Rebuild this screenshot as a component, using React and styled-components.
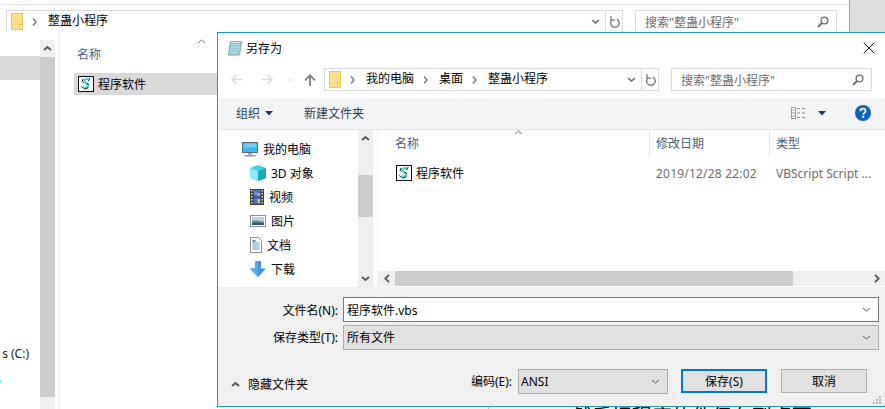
import React from "react";
import styled, { createGlobalStyle } from "styled-components";

const Global = createGlobalStyle`
  html, body { margin: 0; padding: 0; background: #fff; }
  * { box-sizing: border-box; }
  body { font-family: "Noto Sans", "Noto Sans CJK SC", sans-serif; font-size: 12px; color: #000; }
`;

const Screen = styled.div`
  position: relative; width: 885px; height: 409px; overflow: hidden; background: #fff;
`;

/* ---------- background explorer window ---------- */
const BackWindow = styled.div`
  display: flex; flex-direction: column; height: 100%;
`;
const BackTop = styled.div`
  display: flex; height: 32px; flex: none;
`;
const BackTopMain = styled.div`
  flex: none; width: 849px; display: flex; gap: 12px; padding: 10px 0 0 6px; position: relative;
  background: linear-gradient(#fff 4px, #e0e0e0 4px, #e0e0e0 5px, #fff 5px);
`;
const BackSideGray = styled.div`
  flex: 1; background: #dfdfdf; border-left: 1px solid #a0a0a0;
`;
const BackBody = styled.div`
  flex: 1; display: flex; min-height: 0;
`;
const BackNav = styled.div`
  width: 40px; flex: none; padding-top: 24px; position: relative; white-space: nowrap;
`;
const BackSelected = styled.div`
  height: 24px; background: #d9d9d9;
`;
const DriveLabel = styled.span`
  position: absolute; right: 11px; top: 313px; font-size: 12px; color: #222;
`;
const CyanDot = styled.i`
  position: absolute; left: 0; top: 348px; width: 1px; height: 3px; background: #6fe3f5;
`;
const BackScroll = styled.div`
  width: 15px; flex: none; background: #efefef; display: flex; flex-direction: column; align-items: center;
  margin-top: 8px;
`;
const BackThumb = styled.div`
  width: 15px; height: 340px; margin-top: 1px; background: #cdcdcd;
`;
const ArrowCell = styled.div`
  flex: none; height: ${p => p.$h || 16}px; display: flex; align-items: center; justify-content: center;
`;
const BackDivider = styled.div`
  width: 2px; margin-left: 3px; flex: none; background: #f0f0f0;
`;
const BackList = styled.div`
  flex: 1; padding: 13px 0 0 14px; position: relative;
`;
const BackHead = styled.div`
  height: 28px; padding-left: 3px; color: #4c607a; line-height: 20px; font-size: 12px;
`;
const BackSort = styled.span`
  position: absolute; left: 137px; top: 7px; display: flex;
`;
const BackRow = styled.div`
  height: 22px; margin-right: 0; background: #d9d9d9; display: flex; align-items: center; gap: 4px; padding-left: 4px;
`;
const UnderText = styled.div`
  position: absolute; left: 535px; top: 404px; font-size: 20px; line-height: 26px; white-space: pre; color: #000;
`;
const UnderLine = styled.i`
  position: absolute; left: 488px; top: 407px; width: 1px; height: 2px; background: #bbb;
`;

/* ---------- shared address + search ---------- */
const PathBox = styled.div`
  height: ${p => p.$h}px; width: ${p => p.$w}px; flex: none; border: 1px solid #d9d9d9; background: #fff;
  display: flex; align-items: center; padding-left: 4px; white-space: nowrap;
  ${p => p.$open ? "border-bottom: none;" : ""}
`;
const Crumb = styled.span`
  font-size: 12px; color: #000; line-height: 16px; margin-top: -2px;
`;
const CrumbSep = styled.span`
  display: flex; flex: none; margin: 0 11px 0 9px;
`;
const PathEnd = styled.div`
  margin-left: auto; display: flex; align-items: center; height: 100%;
`;
const ChevCell = styled.span`
  width: 22px; display: flex; justify-content: center; align-items: center; padding-left: 3px;
`;
const RefreshCell = styled.span`
  width: 17px; height: 100%; border-left: 1px solid #d9d9d9; display: flex; align-items: center; justify-content: center;
`;
const SearchBox = styled.div`
  width: ${p => p.$w}px; height: ${p => p.$h}px; flex: none; border: 1px solid #d9d9d9; background: #fff;
  display: flex; align-items: center; justify-content: space-between; padding: 0 7px 0 9px;
  color: #6d6d6d; font-size: 12px; white-space: nowrap;
  ${p => p.$open ? "border-bottom: none;" : ""}
`;

/* ---------- dialog ---------- */
const Dialog = styled.div`
  position: absolute; left: 217px; top: 32px; right: 0; height: 375px;
  background: #fff; border-top: 1px solid #1a9cb8; border-left: 1px solid #1a9cb8; border-bottom: 1px solid #1a9cb8;
  display: flex; flex-direction: column;
`;
const TitleBar = styled.div`
  height: 31px; flex: none; display: flex; align-items: center; padding: 0 10px 2px 9px; gap: 3px;
`;
const TitleText = styled.span`
  font-size: 12px; color: #000; flex: 1;
`;
const NavRow = styled.div`
  height: 34px; flex: none; display: flex; align-items: flex-start; padding-top: 4px;
`;
const NavBtn = styled.span`
  width: ${p => p.$w}px; height: 23px; flex: none; display: flex; align-items: center; justify-content: center;
`;
const NavGap = styled.div`
  width: ${p => p.$w}px; flex: none;
`;
const ToolBar = styled.div`
  height: 32px; flex: none; background: #f3f4f6; border-bottom: 1px solid #e5e5e5;
  display: flex; align-items: center; padding: 0 0 1px 18px; color: #2c4a6e;
`;
const ToolText = styled.span`
  font-size: 12px; color: #2b3f5c; margin-right: ${p => p.$mr || 0}px;
`;
const ToolIcon = styled.span`
  display: flex; margin-left: ${p => p.$ml || 0}px; margin-right: ${p => p.$mr || 0}px;
`;
const Content = styled.div`
  flex: none; height: 157px; display: flex;
`;
const NavPane = styled.div`
  width: 140px; flex: none; overflow: hidden; padding-top: 7px;
`;
const TreeRow = styled.div`
  height: 24px; display: flex; align-items: center; gap: 5px;
  padding-left: ${p => p.$root ? 24 : 32}px; font-size: 12px; color: #000; white-space: nowrap;
`;
const VScroll = styled.div`
  width: 15px; flex: none; background: #efefef; display: flex; flex-direction: column;
`;
const VThumb = styled.div`
  height: 42px; flex: none; margin-top: 2px; background: #cdcdcd;
`;
const VSpacer = styled.div` flex: 1; `;
const ListPane = styled.div`
  flex: 1; min-width: 0; margin-left: 4px; border-left: 1px solid #f4f4f4; display: flex; flex-direction: column; position: relative;
`;
const SortMark = styled.span`
  position: absolute; left: 136px; top: 0; display: flex;
`;
const HeadRow = styled.div`
  height: 27px; flex: none; display: flex;
`;
const HeadCell = styled.div`
  width: ${p => p.$w}px; flex: none; padding-left: ${p => p.$pl}px; padding-top: 5px; line-height: 18px;
  font-size: 12px; color: #4c607a; border-right: ${p => p.$sep ? "1px solid #e5e5e5" : "none"};
`;
const FileRow = styled.div`
  height: 22px; flex: none; margin-top: 5px; display: flex; align-items: center; white-space: nowrap; overflow: hidden;
`;
const FileName = styled.span`
  width: 271px; flex: none; padding-left: 18px; display: flex; align-items: center; gap: 4px; font-size: 12px; color: #000;
`;
const FileMeta = styled.span`
  width: ${p => p.$w}px; flex: none; padding-left: 7px; font-size: 12px; color: #6d6d6d; letter-spacing: ${p => p.$ls || 0}px;
`;
const HScroll = styled.div`
  margin-top: auto; height: 15px; margin-bottom: 1px; flex: none; background: #efefef; display: flex; align-items: center;
`;
const HThumb = styled.div`
  width: 398px; height: 15px; flex: none; background: #cdcdcd;
`;
const HArrow = styled.span`
  width: ${p => p.$w}px; flex: none; display: flex; justify-content: center;
`;
const Footer = styled.div`
  flex: 1; min-height: 0; background: #f0f0f0; padding-top: 10px; position: relative;
`;
const FieldRow = styled.div`
  height: 25px; margin-bottom: 2.5px; display: flex; align-items: center;
`;
const FieldLabel = styled.span`
  width: 120px; flex: none; text-align: right; margin-right: 5px; font-size: 12px; color: #000; white-space: nowrap;
`;
const FieldBox = styled.div`
  width: 536px; height: 25px; flex: none; display: flex; align-items: center; justify-content: space-between;
  padding: 0 7px 0 3px; font-size: 12px; color: #000;
  background: ${p => p.$sel ? "#e1e1e1" : "#fff"};
  border: 1px solid ${p => p.$sel ? "#adadad" : "#7a7a7a"};
`;
const ActionRow = styled.div`
  height: 25px; margin-top: 19px; display: flex; align-items: center; padding-left: 13px;
`;
const HideFolders = styled.span`
  display: flex; align-items: center; gap: 8px; font-size: 12px; color: #000; width: 240px; margin-top: 6px;
`;
const EncLabel = styled.span`
  font-size: 12px; color: #000; width: 47px;
`;
const EncSelect = styled.div`
  width: 150px; height: 25px; flex: none; background: #e1e1e1; border: 1px solid #adadad;
  display: flex; align-items: center; justify-content: space-between; padding: 0 7px 0 2px; font-size: 12px; color: #000;
  margin-right: 13px;
`;
const Button = styled.div`
  width: 86px; height: 24px; flex: none; display: flex; align-items: center; justify-content: center; font-size: 12px; color: #000;
  background: #e1e1e1; border: ${p => p.$primary ? "2px solid #0078d7" : "1px solid #adadad"};
  margin-right: 14px;
`;
const Grip = styled.span`
  position: absolute; right: 3px; bottom: 1px; display: flex;
`;

/* ---------- icons ---------- */
const Folder = () => (
  <svg width="12" height="17" viewBox="0 0 12 17">
    <rect x="0.5" y="0.5" width="11" height="16" fill="#fde08a" stroke="#e8c659" />
    <path d="M8.5 11.5h3v5h-3z" fill="#fbe9ad" stroke="#e8c659" />
  </svg>
);
const Chev = ({ dir = "down", c = "#6a6a6a", w = 9, h = 5, sw = 1.4 }) => {
  const paths = { down: "M1 1l3.5 3 3.5-3", up: "M1 4l3.5-3 3.5 3" };
  return (
    <svg width={w} height={h} viewBox="0 0 9 5"><path d={paths[dir]} fill="none" stroke={c} strokeWidth={sw} /></svg>
  );
};
const ChevRight = ({ c = "#808080" }) => (
  <svg width="5" height="8" viewBox="0 0 5 8"><path d="M1 .5l3 3.5-3 3.5" fill="none" stroke={c} strokeWidth="1.6" /></svg>
);
const ChevLeft = ({ c = "#555" }) => (
  <svg width="6" height="9" viewBox="0 0 6 9"><path d="M5 .8L1.3 4.5 5 8.2" fill="none" stroke={c} strokeWidth="1.8" /></svg>
);
const ChevRightBig = ({ c = "#555" }) => (
  <svg width="6" height="9" viewBox="0 0 6 9"><path d="M1 .8l3.7 3.7L1 8.2" fill="none" stroke={c} strokeWidth="1.8" /></svg>
);
const Refresh = () => (
  <svg width="11" height="12" viewBox="0 0 11 12">
    <path d="M7.6 2.6A4.3 4.3 0 1 1 3 2.9" fill="none" stroke="#7d7d7d" strokeWidth="1.4" transform="translate(.4 .6)" />
    <path d="M2 0v4.2h4.2" fill="none" stroke="#7d7d7d" strokeWidth="1.3" />
  </svg>
);
const Magnifier = () => (
  <svg width="12" height="12" viewBox="0 0 12 12">
    <circle cx="7.5" cy="4.5" r="3.4" fill="none" stroke="#6e6e6e" strokeWidth="1.4" />
    <path d="M5 7L1 11" stroke="#6e6e6e" strokeWidth="2" />
  </svg>
);
const ArrowH = ({ flip, c = "#dcdcdc" }) => (
  <svg width="12" height="11" viewBox="0 0 12 11" style={flip ? { transform: "scaleX(-1)" } : undefined}>
    <path d="M11.5 5.5H1.2M5.5 1L1 5.5 5.5 10" fill="none" stroke={c} strokeWidth="1.6" />
  </svg>
);
const ArrowUp = () => (
  <svg width="12" height="12" viewBox="0 0 12 12">
    <path d="M6 12V1.5M1 6.3l5-5 5 5" fill="none" stroke="#7f7f7f" strokeWidth="1.8" />
  </svg>
);
const Tri = () => (
  <svg width="8" height="5" viewBox="0 0 8 5"><path d="M0 0h8L4 4.5z" fill="#22395c" /></svg>
);
const VbsIcon = () => (
  <svg width="16" height="16" viewBox="0 0 16 16">
    <rect x=".5" y=".5" width="15" height="15" fill="#fafafa" stroke="#111" />
    <path d="M10.5 3.4C7.5 2.4 5.4 4 6.6 5.8 8 7.6 10.4 8.2 9.6 10.2c-.8 1.6-2.8 1.8-4.8 1" fill="none" stroke="#2fdcdc" strokeWidth="1.9" />
    <path d="M12 2.2l-1.6 3M5 3l-.8 2.4 1.4 1.4M8.6 7.2l2.6 1.6M10.8 10.6c-.8 1.8-3 2.6-5 2.2M3.4 10.4l1.4 1.4" fill="none" stroke="#111" strokeWidth="1" />
  </svg>
);
const Notepad = () => (
  <svg width="16" height="16" viewBox="0 0 16 16">
    <path d="M3.5 1.5h11l-2 13.5h-11z" fill="#a8d8e2" stroke="#7ba0ac" />
    <path d="M3.5 1.5h11l-.3 2h-11z" fill="#dfe7ea" stroke="#8a9aa2" strokeWidth=".6" />
    <path d="M4 6h8M3.7 8.5h8M3.3 11h8" stroke="#8cc0cd" strokeWidth=".8" />
  </svg>
);
const Computer = () => (
  <svg width="16" height="15" viewBox="0 0 16 15">
    <rect x=".5" y=".5" width="15" height="10" fill="#38b6f1" stroke="#5b6b78" />
    <rect x="1.5" y="1.5" width="13" height="4" fill="#6cd0f8" />
    <path d="M6 11h4v1.5H6z" fill="#8c98a2" />
    <path d="M2.5 13h11v1.5h-11z" fill="#8c98a2" />
  </svg>
);
const Cube = () => (
  <svg width="16" height="16" viewBox="0 0 16 16">
    <path d="M8 0l8 3v10l-8 3-8-3V3z" fill="#3fd0e0" />
    <path d="M8 6v10L0 13V3z" fill="#8eeaf2" />
    <path d="M8 6v10l8-3V3z" fill="#14a9c4" />
  </svg>
);
const Film = () => (
  <svg width="14" height="16" viewBox="0 0 14 16">
    <rect width="14" height="16" fill="#3a3a3a" />
    <path d="M1 1h1.5v1.5H1zM1 4h1.5v1.5H1zM1 7h1.5v1.5H1zM1 10h1.5v1.5H1zM1 13h1.5v1.5H1zM11.5 1H13v1.5h-1.5zM11.5 4H13v1.5h-1.5zM11.5 7H13v1.5h-1.5zM11.5 10H13v1.5h-1.5zM11.5 13H13v1.5h-1.5z" fill="#ddd" />
    <rect x="3.5" y="1" width="7" height="6.5" fill="#5272c4" />
    <rect x="3.5" y="8.5" width="7" height="6.5" fill="#3f6fc8" />
    <path d="M4 5l2-2 1 2zM7 4h3v3H7z" fill="#d9a23a" />
    <path d="M7.5 10h2.5v4H7.5z" fill="#e0c040" />
  </svg>
);
const Picture = () => (
  <svg width="16" height="12" viewBox="0 0 16 12">
    <rect x=".5" y=".5" width="15" height="11" fill="#fff" stroke="#8a8f94" />
    <rect x="2" y="2" width="12" height="4" fill="#b9d4ea" />
    <path d="M2 6c3-1 6 0 12 .5V10H2z" fill="#5f8a8c" />
    <path d="M2 8c4-.5 8 0 12 .3V10H2z" fill="#2f5b66" />
  </svg>
);
const Doc = () => (
  <svg width="12" height="16" viewBox="0 0 12 16">
    <path d="M.5.5h8l3 3v12H.5z" fill="#fff" stroke="#8f8f8f" />
    <path d="M2.5 6h7M2.5 8h7M2.5 10h7M2.5 12h7" stroke="#5a93c9" strokeWidth=".9" />
    <path d="M2.5 3h3v2h-3z" fill="#4f8fce" />
  </svg>
);
const Download = () => (
  <svg width="16" height="16" viewBox="0 0 16 16">
    <path d="M5 0h6v7.5h5L8 16 0 7.5h5z" fill="#3f94e4" />
    <path d="M5 0h3v16L0 7.5h5z" fill="#5aa8ee" />
  </svg>
);
const Views = () => (
  <svg width="16" height="12" viewBox="0 0 16 12">
    <path d="M.5.5h4v11h-4z" fill="#fff" stroke="#9a9a9a" />
    <path d="M1.5 2.5h2v1h-2z" fill="#8a8a8a" />
    <path d="M1.5 5.5h2v1h-2z" fill="#3d7fd0" />
    <path d="M1.5 8.5h2v1h-2z" fill="#d05050" />
    <path d="M6 1.5h3M11 1.5h3M6 6h3M11 6h3M6 10.5h3M11 10.5h3" stroke="#8f8f8f" strokeWidth="1" />
  </svg>
);
const Help = () => (
  <svg width="16" height="16" viewBox="0 0 16 16">
    <circle cx="8" cy="8" r="8" fill="#0a64b8" />
    <path d="M5.4 6.2C5.5 4.5 6.6 3.7 8 3.7c1.5 0 2.6.9 2.6 2.2 0 1.9-2.4 1.9-2.4 3.8" fill="none" stroke="#fff" strokeWidth="1.7" />
    <rect x="7.2" y="10.8" width="2" height="2" fill="#fff" />
  </svg>
);
const CloseX = () => (
  <svg width="12" height="12" viewBox="0 0 12 12"><path d="M.7.7l10.6 10.6M11.3.7L.7 11.3" stroke="#111" strokeWidth="1" /></svg>
);
const GripIcon = () => (
  <svg width="9" height="9" viewBox="0 0 9 9">
    <path d="M6 0h2v2H6zM3 3h2v2H3zM6 3h2v2H6zM0 6h2v2H0zM3 6h2v2H3zM6 6h2v2H6z" fill="#b8b8b8" />
  </svg>
);

const Address = ({ crumbs, w, h, open }) => (
  <PathBox $w={w} $h={h} $open={open}>
    <Folder />
    {crumbs.map(c => (
      <React.Fragment key={c}>
        <CrumbSep><ChevRight /></CrumbSep>
        <Crumb>{c}</Crumb>
      </React.Fragment>
    ))}
    <PathEnd>
      <ChevCell><Chev c="#6a6a6a" sw={1.6} /></ChevCell>
      <RefreshCell><Refresh /></RefreshCell>
    </PathEnd>
  </PathBox>
);

const Search = ({ w, h, open }) => (
  <SearchBox $w={w} $h={h} $open={open}>
    <span>搜索"整蛊小程序"</span>
    <Magnifier />
  </SearchBox>
);

const tree = [
  { label: "3D 对象", icon: <Cube /> },
  { label: "视频", icon: <Film /> },
  { label: "图片", icon: <Picture /> },
  { label: "文档", icon: <Doc /> },
  { label: "下载", icon: <Download /> },
];

export default function App() {
  return (
    <Screen>
      <Global />
      <BackWindow>
        <BackTop>
          <BackTopMain>
            <Address crumbs={["整蛊小程序"]} w={617} h={22} open />
            <Search w={202} h={22} open />
          </BackTopMain>
          <BackSideGray />
        </BackTop>
        <BackBody>
          <BackNav>
            <BackSelected />
            <DriveLabel>s (C:)</DriveLabel>
            <CyanDot />
          </BackNav>
          <BackScroll>
            <ArrowCell><Chev dir="up" c="#555" sw={1.8} /></ArrowCell>
            <BackThumb />
          </BackScroll>
          <BackDivider />
          <BackList>
            <BackSort><Chev dir="up" c="#777" sw={1} /></BackSort>
            <BackHead>名称</BackHead>
            <BackRow><VbsIcon /><span>程序软件</span></BackRow>
          </BackList>
        </BackBody>
      </BackWindow>
      <UnderText>1、 然后把程序软件保存到桌面</UnderText>
      <UnderLine />

      <Dialog>
        <TitleBar>
          <Notepad />
          <TitleText>另存为</TitleText>
          <CloseX />
        </TitleBar>
        <NavRow>
          <NavGap $w={6} />
          <NavBtn $w={26}><ArrowH /></NavBtn>
          <NavBtn $w={34}><ArrowH flip /></NavBtn>
          <NavBtn $w={12}><Chev c="#dcdcdc" w={7} h={4} sw={1.2} /></NavBtn>
          <NavBtn $w={28}><ArrowUp /></NavBtn>
          <Address crumbs={["我的电脑", "桌面", "整蛊小程序"]} w={335} h={23} />
          <NavGap $w={12} />
          <Search w={201} h={23} />
        </NavRow>
        <ToolBar>
          <ToolText>组织</ToolText>
          <ToolIcon $ml={5} $mr={31}><Tri /></ToolIcon>
          <ToolText>新建文件夹</ToolText>
          <VSpacer />
          <ToolIcon $mr={11}><Views /></ToolIcon>
          <ToolIcon $mr={29}><Tri /></ToolIcon>
          <ToolIcon $mr={14}><Help /></ToolIcon>
        </ToolBar>
        <Content>
          <NavPane>
            <TreeRow $root><Computer /><span>我的电脑</span></TreeRow>
            {tree.map(t => (
              <TreeRow key={t.label}>{t.icon}<span>{t.label}</span></TreeRow>
            ))}
          </NavPane>
          <VScroll>
            <ArrowCell $h={16}><Chev dir="up" c="#555" sw={1.8} /></ArrowCell>
            <ArrowCell $h={27} />
            <VThumb />
            <VSpacer />
            <ArrowCell $h={18}><Chev c="#555" sw={1.8} /></ArrowCell>
          </VScroll>
          <ListPane>
            <SortMark><Chev dir="up" c="#777" sw={1} /></SortMark>
            <HeadRow>
              <HeadCell $w={272} $pl={17} $sep>名称</HeadCell>
              <HeadCell $w={120} $pl={6} $sep>修改日期</HeadCell>
              <HeadCell $w={100} $pl={6}>类型</HeadCell>
            </HeadRow>
            <FileRow>
              <FileName><VbsIcon /><span>程序软件</span></FileName>
              <FileMeta $w={120} $ls={0.2}>2019/12/28 22:02</FileMeta>
              <FileMeta $w={116}>VBScript Script ...</FileMeta>
            </FileRow>
            <HScroll>
              <HArrow $w={17}><ChevLeft /></HArrow>
              <HThumb />
              <VSpacer />
              <HArrow $w={17}><ChevRightBig /></HArrow>
            </HScroll>
          </ListPane>
        </Content>
        <Footer>
          <FieldRow>
            <FieldLabel>文件名(N):</FieldLabel>
            <FieldBox>程序软件.vbs<Chev c="#555" sw={1} /></FieldBox>
          </FieldRow>
          <FieldRow>
            <FieldLabel>保存类型(T):</FieldLabel>
            <FieldBox $sel>所有文件<Chev c="#555" sw={1} /></FieldBox>
          </FieldRow>
          <ActionRow>
            <HideFolders><Chev dir="up" c="#555" sw={1.8} />隐藏文件夹</HideFolders>
            <EncLabel>编码(E):</EncLabel>
            <EncSelect>ANSI<Chev c="#555" sw={1} /></EncSelect>
            <Button $primary>保存(S)</Button>
            <Button>取消</Button>
          </ActionRow>
          <Grip><GripIcon /></Grip>
        </Footer>
      </Dialog>
    </Screen>
  );
}
